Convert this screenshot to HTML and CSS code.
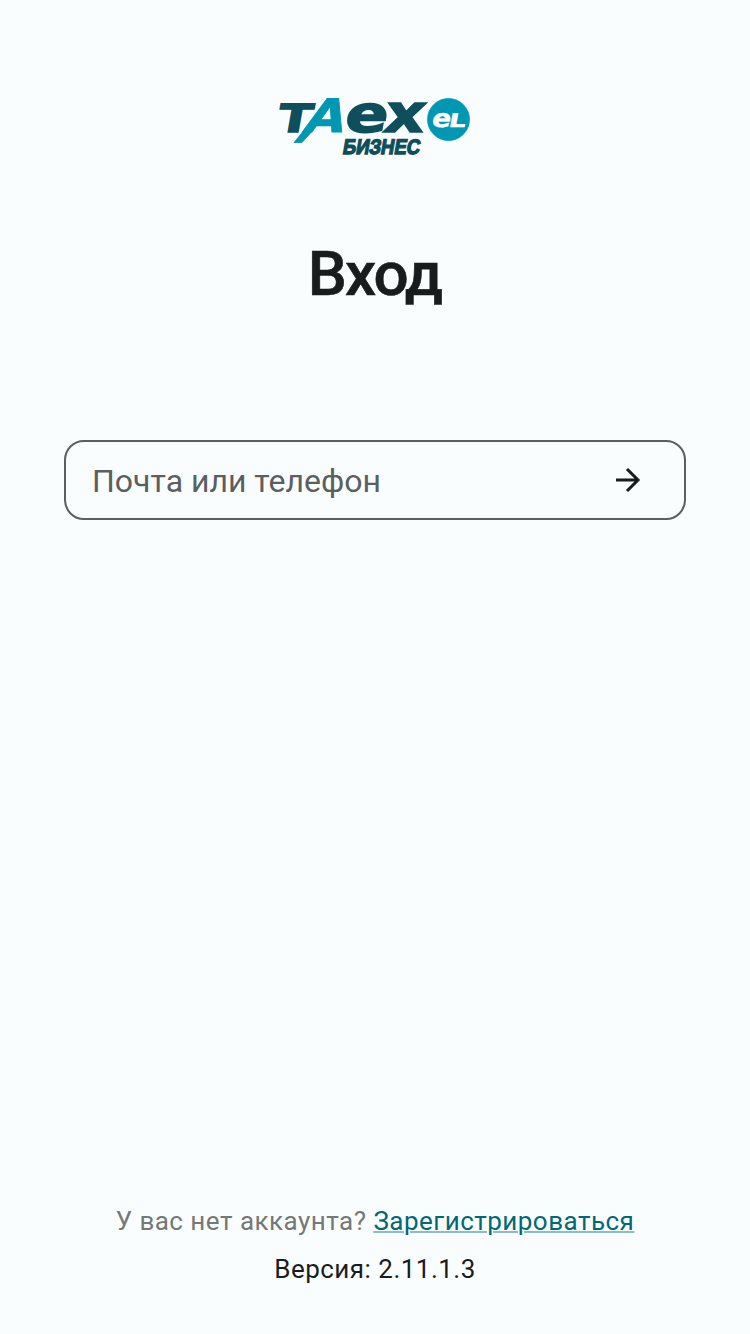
FILE: index.html
```html
<!DOCTYPE html>
<html lang="ru">
    <head>
        <title>Вход</title>
        <meta charset="UTF-8">
        <meta name="viewport" content="width=device-width, initial-scale=1.0">
        <link rel="stylesheet" href="styles.css">
    </head>
    <body>
        <main class="login">
            <svg class="logo" width="192" height="60" viewBox="279 96 192 60">
                <g class="logo-dark">
                    <text class="logo-wide" transform="translate(276 132) skewX(-10) scale(1.28 1)" font-size="39">T</text>
                    <text class="logo-wide" transform="translate(343 132) skewX(-10)" font-size="51" textLength="43" lengthAdjust="spacingAndGlyphs">e</text>
                    <text class="logo-wide" transform="translate(382 132) skewX(-10)" font-size="53" textLength="41" lengthAdjust="spacingAndGlyphs">x</text>
                    <text class="logo-small" transform="translate(342 153.500) skewX(-10)" font-size="21" textLength="77" lengthAdjust="spacingAndGlyphs">БИЗНЕС</text>
                </g>
                <g class="logo-teal">
                    <text class="logo-wide" transform="translate(302 132) skewX(-18)" font-size="46" textLength="40" lengthAdjust="spacingAndGlyphs">A</text>
                    <path d="M303 131.500L294 142.500H302L312 131.500Z"/>
                    <circle cx="448.500" cy="119.500" r="21"/>
                </g>
                <g class="logo-light">
                    <text class="logo-wide" transform="translate(431 127) skewX(-10)" font-size="25" textLength="19" lengthAdjust="spacingAndGlyphs">e</text>
                    <text class="logo-wide" transform="translate(448 127) skewX(-10)" font-size="19" textLength="17" lengthAdjust="spacingAndGlyphs">L</text>
                </g>
            </svg>
            <h1 class="title">Вход</h1>
            <form class="field">
                <input class="field-input" type="text" placeholder="Почта или телефон">
                <svg class="field-arrow" width="36" height="36" viewBox="0 0 36 36">
                    <path d="M6 18H28M17 7L28 18L17 29"/>
                </svg>
            </form>
            <footer class="footer">
                <p class="register">У вас нет аккаунта? <a class="register-link" href="#">Зарегистрироваться</a></p>
                <p class="version">Версия: 2.11.1.3</p>
            </footer>
        </main>
    </body>
</html>
```
FILE: styles.css
```css
body{
    margin: 0;
    background-color: #fafdfd;
    color: #191c1d;
    font-family: Roboto, sans-serif;
}
.login{
    display: flex;
    flex-direction: column;
    align-items: center;
    box-sizing: border-box;
    height: 1334px;
    padding: 96px 64px 45px;
}
.logo{
    flex: none;
    overflow: visible;
}
.logo-wide{
    font-family: "DejaVu Sans", sans-serif;
    font-weight: bold;
}
.logo-small{
    font-family: "Liberation Sans", sans-serif;
    font-weight: bold;
}
.logo-dark{
    fill: #0e4f5b;
    stroke: #0e4f5b;
    stroke-width: 1.4;
}
.logo-teal{
    fill: #0097b2;
    stroke: #0097b2;
    stroke-width: 0.8;
}
.logo-light{
    fill: white;
    stroke: white;
    stroke-width: 0.4;
}
.title{
    margin: 80px 1px 0 0;
    font-size: 62px;
    font-weight: 500;
    line-height: 76px;
    letter-spacing: -1.8px;
    -webkit-text-stroke: 0.6px #191c1d;
}
.field{
    display: flex;
    align-items: center;
    box-sizing: border-box;
    width: 100%;
    height: 80px;
    margin-top: 128px;
    padding: 0 38px 0 26px;
    border: 2px solid #5b5f60;
    border-radius: 20px;
}
.field-input{
    flex: 1;
    min-width: 0;
    padding: 2px 0 0;
    border: none;
    outline: none;
    background: none;
    color: #191c1d;
    font-family: inherit;
    font-size: 32px;
}
.field-input::placeholder{
    color: #5b5f60;
}
.field-arrow path{
    fill: none;
    stroke: #191c1d;
    stroke-width: 3;
}
.footer{
    margin-top: auto;
    font-size: 26px;
    line-height: 40px;
    letter-spacing: 0.48px;
    text-align: center;
}
.footer p{
    margin: 0;
}
.register{
    color: #747878;
}
.register-link{
    color: #006876;
    text-decoration-color: #8fbcc2;
    text-decoration-thickness: 2px;
}
.footer .version{
    margin-top: 8px;
}
```
